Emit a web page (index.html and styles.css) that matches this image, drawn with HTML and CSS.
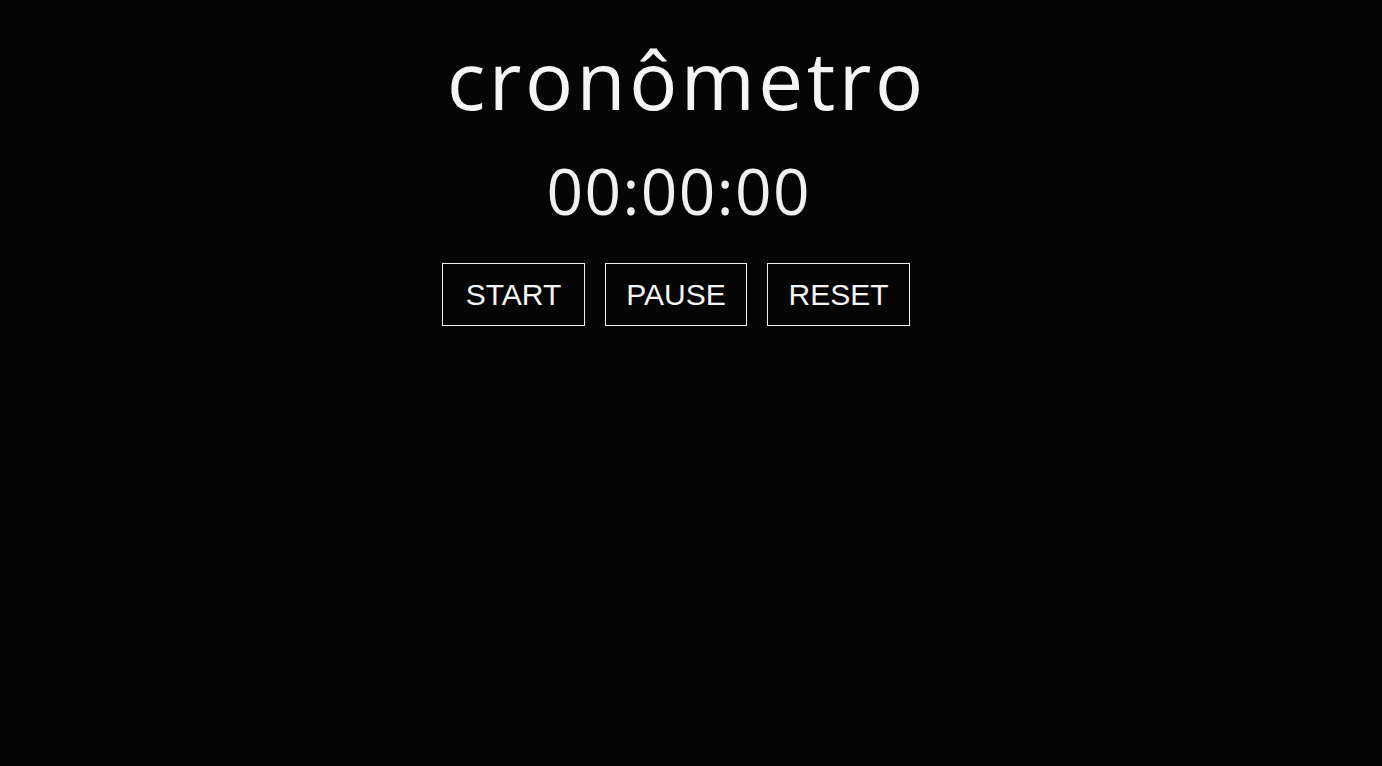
FILE: index.html
```html
<!DOCTYPE html>
<html lang="pt-BR">
<head>
<meta charset="utf-8">
<title>cronômetro</title>
<link rel="stylesheet" href="styles.css">
</head>
<body>
<main class="app">
  <h1 class="title">cronômetro</h1>
  <div class="timer">00:00:00</div>
  <div class="controls">
    <button class="btn btn-start">START</button>
    <button class="btn btn-pause">PAUSE</button>
    <button class="btn btn-reset">RESET</button>
  </div>
</main>
</body>
</html>
```
FILE: styles.css
```css
html, body {
  margin: 0;
  padding: 0;
  background: #050505;
  height: 100%;
}
.app {
  display: flex;
  flex-direction: column;
  align-items: center;
  padding-top: 39px;
}
.title {
  margin: 0 8.5px 0 0;
  font-family: "Open Sans", sans-serif;
  font-weight: 400;
  font-size: 80px;
  line-height: 1;
  letter-spacing: 3.5px;
  color: #f5f5f5;
}
.timer {
  margin: 40px 24.6px 0 0;
  font-family: "Open Sans", sans-serif;
  font-weight: 400;
  font-size: 64px;
  line-height: 1;
  letter-spacing: 1.43px;
  color: #f0f0f0;
}
.controls {
  display: flex;
  gap: 20px;
  margin: 40px 30px 0 0;
}
.btn {
  box-sizing: border-box;
  width: 143px;
  height: 63px;
  padding: 0;
  background: #050505;
  border: 1px solid #f0f0f0;
  color: #f5f5f5;
  font-family: "Liberation Sans", Arial, sans-serif;
  font-size: 30px;
}
.btn-pause {
  width: 142px;
}
```
